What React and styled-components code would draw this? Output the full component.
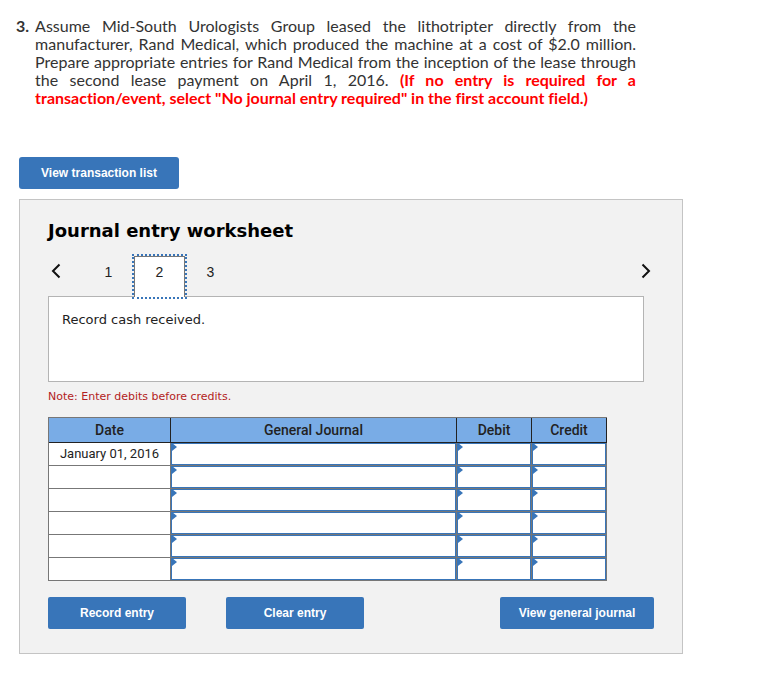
import React, { useState } from 'react';
import styled, { createGlobalStyle } from 'styled-components';

const GlobalStyle = createGlobalStyle`
  * {
    box-sizing: border-box;
  }
  body {
    margin: 0;
    background: #ffffff;
    color: #222222;
    font-family: 'Liberation Sans', Arial, sans-serif;
  }
`;

const Page = styled.main`
  padding: 17px 80px 36px 19px;
`;

// Question text with its number
const Question = styled.section`
  display: flex;
  gap: 6px;
  margin: 0 47px 50px -3px;
  color: #333333;
  font-family: Lato, sans-serif;
  font-size: 16px;
  font-variant-ligatures: none;
  line-height: 18px;
`;

const QuestionNumber = styled.span`
  font-weight: bold;
`;

const QuestionText = styled.p`
  margin: 0;
  text-align: justify;
`;

const Instruction = styled.strong`
  color: #ff0000;
`;

const BlueButton = styled.button`
  min-width: ${(props) => props.$width || '138px'};
  height: 32px;
  padding: 0 16px 1px;
  border: 0;
  border-radius: ${(props) => props.$radius || '2px'};
  background: #3875b9;
  color: #ffffff;
  font-family: 'Liberation Sans', Arial, sans-serif;
  font-size: 12px;
  font-weight: bold;
  cursor: pointer;
`;

const Panel = styled.section`
  margin-top: 10px;
  padding: 20px 28px 24px;
  border: 1px solid #c4c4c4;
  background: #f2f2f2;
`;

const Title = styled.h1`
  margin: 0 0 14px;
  color: #000000;
  font-family: 'DejaVu Sans', Verdana, sans-serif;
  font-size: 18px;
  line-height: 22px;
`;

// Entry tabs between the two arrows
const TabBar = styled.nav`
  display: flex;
  align-items: stretch;
  height: 41px;
  margin: 0 0 -1px;
`;

const ArrowButton = styled.button`
  display: flex;
  align-items: center;
  justify-content: center;
  width: 16px;
  height: 30px;
  padding: 0;
  border: 0;
  background: none;
  cursor: pointer;
`;

const Tabs = styled.div`
  display: flex;
  flex: 1;
  margin-left: 19px;
`;

const Tab = styled.button`
  position: relative;
  width: 51px;
  padding: 0 0 10px;
  border: 1px solid ${(props) => (props.$active ? '#777777' : 'transparent')};
  border-bottom: 0;
  background: ${(props) => (props.$active ? '#ffffff' : 'transparent')};
  outline: ${(props) => (props.$active ? '2px dotted #3875b9' : 'none')};
  color: #222222;
  font-family: 'Liberation Sans', Arial, sans-serif;
  font-size: 14px;
  cursor: pointer;
`;

const Description = styled.div`
  min-height: 86px;
  margin-right: 10px;
  padding: 14px 13px;
  border: 1px solid #b4b4b4;
  background: #ffffff;
  color: #222222;
  font-family: 'DejaVu Sans', Verdana, sans-serif;
  font-size: 13px;
  line-height: 18px;
`;

const Note = styled.p`
  margin: 7px 0 12px;
  color: #b22222;
  font-family: 'DejaVu Sans', Verdana, sans-serif;
  font-size: 11px;
  line-height: 16px;
`;

const JournalFrame = styled.div`
  margin-right: 47px;
`;

const Journal = styled.table`
  width: 100%;
  table-layout: fixed;
  border-collapse: separate;
  border-spacing: 0;
  border-top: 1px solid #777777;
  border-left: 1px solid #777777;
  font-family: Roboto, sans-serif;
  font-size: 14px;
  line-height: 16px;
`;

const HeadCell = styled.th`
  width: ${(props) => props.$width};
  height: 25px;
  padding: 0;
  border-right: 1px solid #222222;
  border-bottom: 1px solid #222222;
  background: #79ace6;
  font-weight: 500;
`;

const DateCell = styled.td`
  height: 23px;
  padding: 0;
  border-right: 1px solid #777777;
  border-bottom: 1px solid #777777;
  background: #ffffff;
  font-size: 13px;
  text-align: center;
`;

const EntryCell = styled.td`
  position: relative;
  height: 23px;
  padding: 0;
  border-right: 1px solid #777777;
  border-bottom: 1px solid #777777;

  &::after {
    content: '';
    position: absolute;
    top: 0;
    left: 1px;
    border: 4px solid transparent;
    border-left: 5px solid #3875b9;
    border-right: 0;
    pointer-events: none;
  }
`;

const EntryInput = styled.input`
  display: block;
  width: 100%;
  height: 22px;
  padding: 0 6px;
  border: 1px solid #3875b9;
  border-radius: 0;
  background: #ffffff;
  font-size: 13px;
`;

const Actions = styled.div`
  display: flex;
  margin-top: 16px;
  gap: 40px;
`;

const LastAction = styled.div`
  margin-left: auto;
`;

const Chevron = ({ points }) => (
  <svg width="10" height="16" viewBox="0 0 10 16" aria-hidden="true">
    <polyline points={points} fill="none" stroke="#111111" strokeWidth="2" />
  </svg>
);

const rows = ['January 01, 2016', '', '', '', '', ''];
const columns = ['General Journal', 'Debit', 'Credit'];

const App = () => {
  const [active, setActive] = useState(2);

  return (
    <>
      <GlobalStyle />
      <Page>
        <Question>
          <QuestionNumber>3.</QuestionNumber>
          <QuestionText>
            Assume Mid-South Urologists Group leased the lithotripter directly from the
            manufacturer, Rand Medical, which produced the machine at a cost of $2.0 million.
            Prepare appropriate entries for Rand Medical from the inception of the lease through
            the second lease payment on April 1, 2016.{' '}
            <Instruction>
              (If no entry is required for a transaction/event, select "No journal entry
              required" in the first account field.)
            </Instruction>
          </QuestionText>
        </Question>

        <BlueButton $width="160px" $radius="3px">View transaction list</BlueButton>

        <Panel>
          <Title>Journal entry worksheet</Title>
          <TabBar>
            <ArrowButton aria-label="Previous" onClick={() => setActive(Math.max(1, active - 1))}>
              <Chevron points="8.5,1.5 2,8 8.5,14.5" />
            </ArrowButton>
            <Tabs>
              {[1, 2, 3].map((n) => (
                <Tab key={n} $active={n === active} onClick={() => setActive(n)}>
                  {n}
                </Tab>
              ))}
            </Tabs>
            <ArrowButton aria-label="Next" onClick={() => setActive(Math.min(3, active + 1))}>
              <Chevron points="1.5,1.5 8,8 1.5,14.5" />
            </ArrowButton>
          </TabBar>
          <Description>Record cash received.</Description>
          <Note>Note: Enter debits before credits.</Note>

          <JournalFrame>
            <Journal>
              <thead>
                <tr>
                  <HeadCell $width="122px">Date</HeadCell>
                  <HeadCell>General Journal</HeadCell>
                  <HeadCell $width="75px">Debit</HeadCell>
                  <HeadCell $width="75px">Credit</HeadCell>
                </tr>
              </thead>
              <tbody>
                {rows.map((date, i) => (
                  <tr key={i}>
                    <DateCell>{date}</DateCell>
                    {columns.map((column) => (
                      <EntryCell key={column}>
                        <EntryInput aria-label={`${column}, row ${i + 1}`} />
                      </EntryCell>
                    ))}
                  </tr>
                ))}
              </tbody>
            </Journal>
          </JournalFrame>

          <Actions>
            <BlueButton>Record entry</BlueButton>
            <BlueButton>Clear entry</BlueButton>
            <LastAction>
              <BlueButton $width="154px">View general journal</BlueButton>
            </LastAction>
          </Actions>
        </Panel>
      </Page>
    </>
  );
};

export default App;
